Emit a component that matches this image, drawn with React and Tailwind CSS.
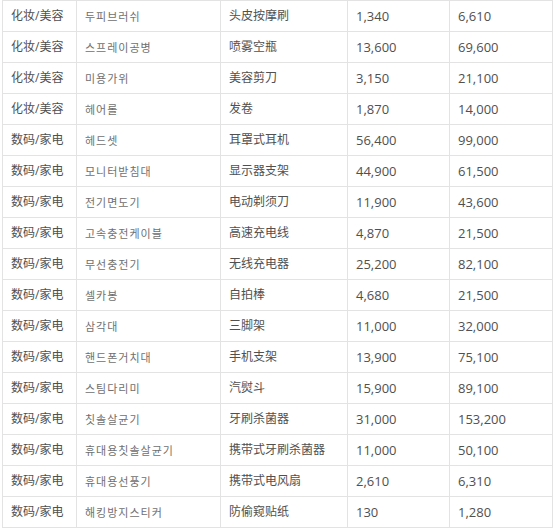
const rows = [
  ['化妆/美容', '두피브러쉬', '头皮按摩刷', '1,340', '6,610'],
  ['化妆/美容', '스프레이공병', '喷雾空瓶', '13,600', '69,600'],
  ['化妆/美容', '미용가위', '美容剪刀', '3,150', '21,100'],
  ['化妆/美容', '헤어롤', '发卷', '1,870', '14,000'],
  ['数码/家电', '헤드셋', '耳罩式耳机', '56,400', '99,000'],
  ['数码/家电', '모니터받침대', '显示器支架', '44,900', '61,500'],
  ['数码/家电', '전기면도기', '电动剃须刀', '11,900', '43,600'],
  ['数码/家电', '고속충전케이블', '高速充电线', '4,870', '21,500'],
  ['数码/家电', '무선충전기', '无线充电器', '25,200', '82,100'],
  ['数码/家电', '셀카봉', '自拍棒', '4,680', '21,500'],
  ['数码/家电', '삼각대', '三脚架', '11,000', '32,000'],
  ['数码/家电', '핸드폰거치대', '手机支架', '13,900', '75,100'],
  ['数码/家电', '스팀다리미', '汽熨斗', '15,900', '89,100'],
  ['数码/家电', '칫솔살균기', '牙刷杀菌器', '31,000', '153,200'],
  ['数码/家电', '휴대용칫솔살균기', '携带式牙刷杀菌器', '11,000', '50,100'],
  ['数码/家电', '휴대용선풍기', '携带式电风扇', '2,610', '6,310'],
  ['数码/家电', '해킹방지스티커', '防偷窥贴纸', '130', '1,280'],
];

// column widths and per-column text look
const cols = [
  'w-[74px] text-[12px]',
  'w-[144px] text-[11px] tracking-[1px] text-[#707070]',
  'w-[127px] text-[12px]',
  'w-[102px] text-[13px]',
  'w-[103px] text-[13px]',
];

export default function App() {
  return (
    <div className="bg-white w-[554px] h-[528px] overflow-hidden pl-[2px]">
      <table
        className="border-collapse table-fixed w-[551px] text-[#505050]"
        style={{ fontFamily: '"Open Sans", "Noto Sans CJK SC", "Noto Sans CJK KR", sans-serif' }}
      >
        <tbody>
          {rows.map((r, i) => (
            <tr key={i} className="h-[31px]">
              {r.map((c, j) => (
                <td
                  key={j}
                  className={`${cols[j]} border border-[#e3e3e3] px-[8px] leading-none whitespace-nowrap`}
                >
                  {c}
                </td>
              ))}
            </tr>
          ))}
        </tbody>
      </table>
    </div>
  );
}
